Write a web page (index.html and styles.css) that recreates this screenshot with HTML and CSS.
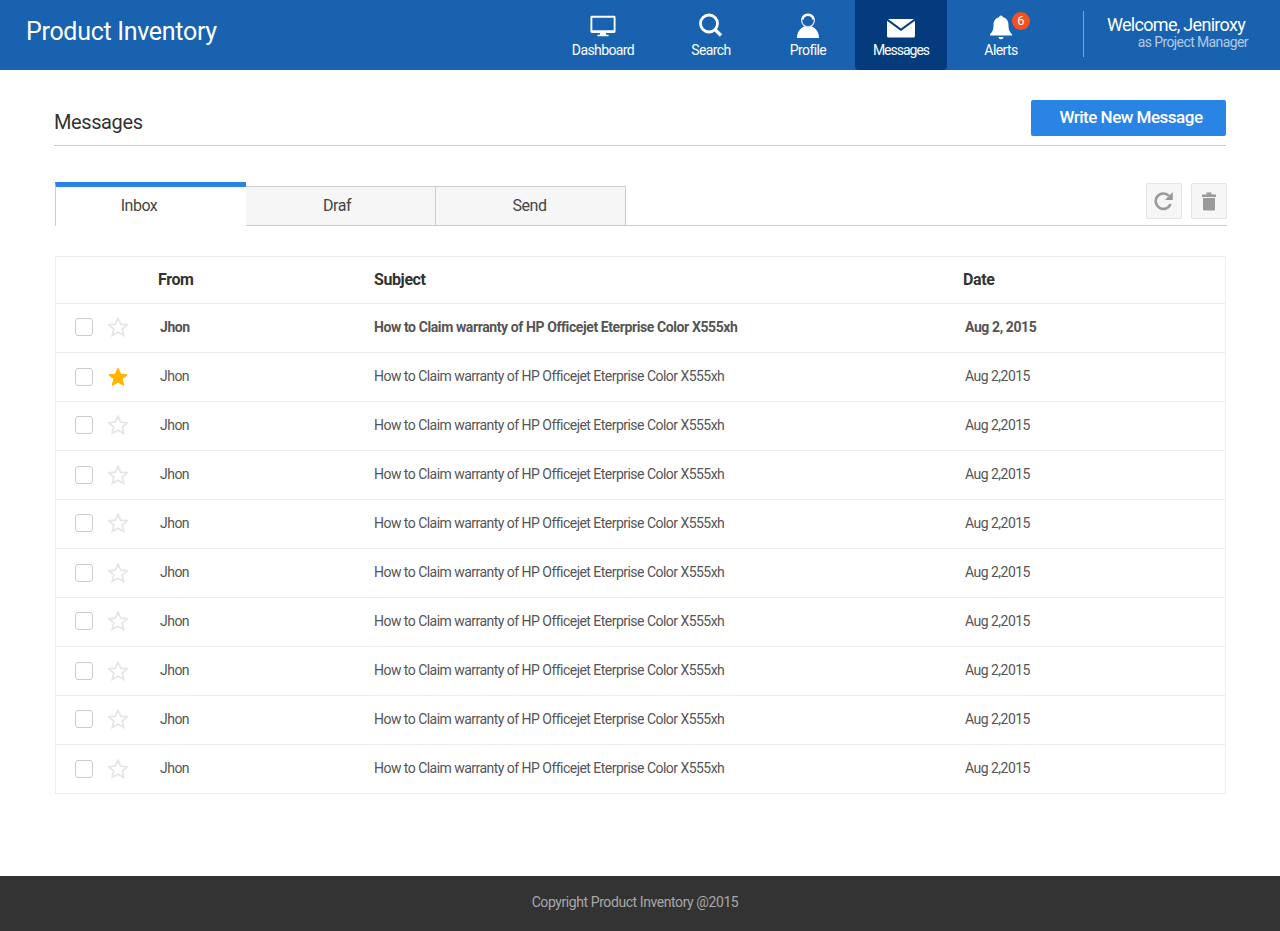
FILE: index.html
```html
<!DOCTYPE html>
<html lang="en">
<head>
<meta charset="utf-8">
<title>Product Inventory</title>
<link rel="stylesheet" href="styles.css">
</head>
<body>
<svg class="sprite" width="0" height="0" aria-hidden="true">
  <defs>
    <path id="star" d="M10 1.2l2.7 5.9 6.4.7-4.8 4.3 1.4 6.3L10 15.2l-5.700 3.200 1.400-6.300L.9 7.800l6.400-.7z"/>
  </defs>
</svg>
<header class="topbar">
  <div class="brand">Product Inventory</div>
  <nav class="nav">
    <a class="nav-item nav-dash"><svg class="nav-icon" width="26" height="24" viewBox="0 0 28 24"><path fill="#fff" d="M2 1h24a1.500 1.500 0 0 1 1.500 1.500V18a1.500 1.500 0 0 1-1.500 1.500H17l.5 2H20V23H8v-1.500h2.500l.5-2H2A1.500 1.500 0 0 1 .5 18V2.500A1.500 1.500 0 0 1 2 1zm.5 2.200v13.300h23V3.200z"/></svg><span>Dashboard</span></a>
    <a class="nav-item nav-search"><svg class="nav-icon" width="26" height="25" viewBox="0 0 26 25"><circle cx="11" cy="10.500" r="8.500" fill="none" stroke="#fff" stroke-width="2.800"/><path d="M17 16.500l6 6" stroke="#fff" stroke-width="3.200" fill="none"/></svg><span>Search</span></a>
    <a class="nav-item nav-profile"><svg class="nav-icon" width="24" height="26" viewBox="0 0 24 26"><circle cx="12" cy="8.500" r="6.300" fill="none" stroke="#fff" stroke-opacity=".8" stroke-width="1.400"/><path fill="none" stroke="#fff" stroke-width="2.200" d="M6.500 7.500a5.600 5.600 0 0 1 11 0"/><path fill="#fff" d="M1 26c0-6.500 3.500-10 7.500-11.800 2 1.400 5 1.400 7 0C19.500 16 23 19.500 23 26z"/></svg><span>Profile</span></a>
    <a class="nav-item nav-messages is-active"><svg class="nav-icon" width="30" height="20" viewBox="0 0 30 20"><path fill="#fff" d="M2 1h26L15 10.500zM1 2.800v15.200c0 .8.700 1.500 1.500 1.500h25c.8 0 1.500-.7 1.500-1.500V2.800L15 13z"/></svg><span>Messages</span></a>
    <a class="nav-item nav-alerts"><svg class="nav-icon nav-icon-bell" width="26" height="25" viewBox="0 0 26 25"><path fill="#fff" d="M13 .5a2 2 0 0 1 2 1.800c4 1 5.500 4 5.500 8 0 5 1.500 7 3.500 9v1.200H2v-1.200c2-2 3.500-4 3.500-9 0-4 1.500-7 5.500-8A2 2 0 0 1 13 .5zM10.500 22h5c0 1.200-1 2.200-2.500 2.200s-2.500-1-2.500-2.200z"/></svg><span>Alerts</span><b class="badge">6</b></a>
  </nav>
  <div class="welcome">
    <div class="welcome-name">Welcome, Jeniroxy</div>
    <div class="welcome-role">as Project Manager</div>
  </div>
</header>

<main class="content">
  <div class="page-head">
    <h1>Messages</h1>
    <button class="btn-write">Write New Message</button>
  </div>

  <div class="tabs">
    <a class="tab tab-inbox is-active">Inbox</a>
    <a class="tab tab-draf">Draf</a>
    <a class="tab tab-send">Send</a>
    <div class="tab-tools">
      <button class="tool"><svg width="20" height="20" viewBox="0 0 20 20"><path fill="none" stroke="#999" stroke-width="2.600" d="M16.600 13A7.700 7.700 0 1 1 15 4.800"/><path fill="#999" d="M18.800 1v8h-8z"/></svg></button>
      <button class="tool"><svg width="16" height="20" viewBox="0 0 16 20"><path fill="#999" d="M1 3.500h4.500V1.500h5v2H15V6H1zM2 7h12v11.500a1 1 0 0 1-1 1H3a1 1 0 0 1-1-1z"/></svg></button>
    </div>
  </div>

  <div class="table">
    <div class="row row-head"><span></span><span class="c-from">From</span><span class="c-subject">Subject</span><span class="c-date">Date</span></div>
    <div class="row is-unread"><span class="marks"><i class="check"></i><svg class="star" viewBox="0 0 20 20"><use href="#star"/></svg></span><span class="c-from">Jhon</span><span class="c-subject">How to Claim warranty of HP Officejet Eterprise Color X555xh</span><span class="c-date">Aug 2, 2015</span></div>
    <div class="row"><span class="marks"><i class="check"></i><svg class="star is-on" viewBox="0 0 20 20"><use href="#star"/></svg></span><span class="c-from">Jhon</span><span class="c-subject">How to Claim warranty of HP Officejet Eterprise Color X555xh</span><span class="c-date">Aug 2,2015</span></div>
    <div class="row"><span class="marks"><i class="check"></i><svg class="star" viewBox="0 0 20 20"><use href="#star"/></svg></span><span class="c-from">Jhon</span><span class="c-subject">How to Claim warranty of HP Officejet Eterprise Color X555xh</span><span class="c-date">Aug 2,2015</span></div>
    <div class="row"><span class="marks"><i class="check"></i><svg class="star" viewBox="0 0 20 20"><use href="#star"/></svg></span><span class="c-from">Jhon</span><span class="c-subject">How to Claim warranty of HP Officejet Eterprise Color X555xh</span><span class="c-date">Aug 2,2015</span></div>
    <div class="row"><span class="marks"><i class="check"></i><svg class="star" viewBox="0 0 20 20"><use href="#star"/></svg></span><span class="c-from">Jhon</span><span class="c-subject">How to Claim warranty of HP Officejet Eterprise Color X555xh</span><span class="c-date">Aug 2,2015</span></div>
    <div class="row"><span class="marks"><i class="check"></i><svg class="star" viewBox="0 0 20 20"><use href="#star"/></svg></span><span class="c-from">Jhon</span><span class="c-subject">How to Claim warranty of HP Officejet Eterprise Color X555xh</span><span class="c-date">Aug 2,2015</span></div>
    <div class="row"><span class="marks"><i class="check"></i><svg class="star" viewBox="0 0 20 20"><use href="#star"/></svg></span><span class="c-from">Jhon</span><span class="c-subject">How to Claim warranty of HP Officejet Eterprise Color X555xh</span><span class="c-date">Aug 2,2015</span></div>
    <div class="row"><span class="marks"><i class="check"></i><svg class="star" viewBox="0 0 20 20"><use href="#star"/></svg></span><span class="c-from">Jhon</span><span class="c-subject">How to Claim warranty of HP Officejet Eterprise Color X555xh</span><span class="c-date">Aug 2,2015</span></div>
    <div class="row"><span class="marks"><i class="check"></i><svg class="star" viewBox="0 0 20 20"><use href="#star"/></svg></span><span class="c-from">Jhon</span><span class="c-subject">How to Claim warranty of HP Officejet Eterprise Color X555xh</span><span class="c-date">Aug 2,2015</span></div>
    <div class="row"><span class="marks"><i class="check"></i><svg class="star" viewBox="0 0 20 20"><use href="#star"/></svg></span><span class="c-from">Jhon</span><span class="c-subject">How to Claim warranty of HP Officejet Eterprise Color X555xh</span><span class="c-date">Aug 2,2015</span></div>
  </div>
</main>

<footer class="footer">Copyright Product Inventory @2015</footer>
</body>
</html>
```

FILE: styles.css
```css
* { box-sizing: border-box; }
html, body { margin: 0; padding: 0; }
body {
  height: 931px;
  display: flex;
  flex-direction: column;
  background: #fff;
  color: #333;
  font-family: Roboto, "Liberation Sans", sans-serif;
  overflow: hidden;
}
.sprite { position: absolute; }

.topbar {
  height: 70px;
  flex: none;
  display: flex;
  align-items: stretch;
  background: #1862b0;
  color: #fff;
  padding-left: 26px;
}
.brand { font-size: 25px; line-height: 64px; width: 519px; letter-spacing: -.3px; flex: none; }
.nav { display: flex; flex: none; }
.nav-item {
  position: relative;
  display: flex;
  flex-direction: column;
  align-items: center;
  justify-content: flex-end;
  padding-bottom: 11px;
  font-size: 14px;
  line-height: 18px;
  letter-spacing: -.6px;
  flex: none;
}
.nav-icon { display: block; margin-bottom: 3px; }
.nav-icon-bell { margin-bottom: 1px; }
.nav-dash { width: 116px; }
.nav-search { width: 100px; }
.nav-profile { width: 94px; }
.nav-messages { width: 92px; letter-spacing: -1px; }
.nav-alerts { width: 108px; }
.nav-item.is-active { background: #033b7d; border-radius: 0 0 4px 4px; }
.badge {
  position: absolute;
  top: 12px;
  left: 65px;
  width: 18px;
  height: 18px;
  border-radius: 50%;
  background: #f4511e;
  font-size: 13px;
  font-weight: 400;
  line-height: 18px;
  letter-spacing: 0;
  text-align: center;
}
.welcome {
  margin: 11px 0 13px 28px;
  border-left: 1px solid #7ba4d2;
  padding: 3px 0 0 23px;
  flex: none;
  width: 165px;
}
.welcome-name { font-size: 18px; line-height: 22px; letter-spacing: -.7px; white-space: nowrap; }
.welcome-role { font-size: 14px; line-height: 13px; letter-spacing: -.6px; color: #b3cbe6; text-align: right; white-space: nowrap; }

.content { flex: 1; padding: 30px 54px 0; }
.page-head {
  height: 46px;
  display: flex;
  justify-content: space-between;
  align-items: flex-start;
  border-bottom: 1px solid #ccc;
}
.page-head h1 { margin: 9px 0 0; font-size: 20px; line-height: 27px; letter-spacing: -.4px; font-weight: 400; color: #333; }
.btn-write {
  width: 195px;
  height: 36px;
  border: 0;
  border-radius: 2px;
  background: #2a84e6;
  color: #fff;
  font: 500 17px/34px Roboto, sans-serif;
  letter-spacing: -.5px;
  padding: 0 0 2px 5px;
}

.tabs {
  margin: 36px -1px 0 1px;
  height: 44px;
  display: flex;
  align-items: flex-end;
  border-bottom: 1px solid #ccc;
}
.tab {
  width: 190px;
  height: 40px;
  margin-bottom: -1px;
  background: #f6f6f6;
  border: 1px solid #ccc;
  border-left: 0;
  text-align: center;
  font-size: 16px;
  line-height: 38px;
  letter-spacing: -.5px;
  color: #444;
}
.tab-draf { padding-right: 7px; }
.tab-send { padding-right: 2px; }
.tab.is-active {
  width: 191px;
  height: 44px;
  background: #fff;
  border: 0;
  border-left: 1px solid #ccc;
  border-top: 5px solid #2a84e6;
  padding-right: 24px;
  line-height: 37px;
}
.tab-tools { margin: 0 0 6px auto; display: flex; gap: 9px; align-self: flex-end; }
.tool {
  width: 36px;
  height: 36px;
  padding: 0;
  border: 1px solid #e4e4e4;
  border-radius: 2px;
  background: #f6f6f6;
  display: flex;
  align-items: center;
  justify-content: center;
}

.table { margin: 30px 0 0 1px; border: 1px solid #ececec; border-bottom: 0; }
.row {
  display: grid;
  grid-template-columns: 104px 214px 591px 1fr;
  height: 49px;
  align-items: center;
  border-bottom: 1px solid #ececec;
  font-size: 14px;
  letter-spacing: -.53px;
  color: #555;
}
.c-from, .c-subject, .c-date { margin-top: -2px; }
.row-head {
  height: 47px;
  font-size: 16px;
  letter-spacing: -.4px;
  font-weight: 700;
  color: #333;
}
.row-head .c-from { margin-left: -2px; }
.row-head .c-date { margin-left: -2px; }
.is-unread { font-weight: 700; letter-spacing: -.4px; }
.marks { display: flex; align-items: center; padding-left: 19px; gap: 15px; height: 100%; margin-top: -2px; }
.row:nth-child(odd) .marks { margin-top: 0; }
.check {
  width: 18px;
  height: 18px;
  flex: none;
  border: 1px solid #ccc;
  border-radius: 3px;
  background: #fff;
}
.star {
  width: 20px;
  height: 20px;
  flex: none;
  fill: none;
  stroke: #e6e6e6;
  stroke-width: 1.800;
}
.star.is-on { fill: #ffb400; stroke: #ffb400; stroke-width: 1; }

.footer {
  height: 55px;
  flex: none;
  background: #333;
  color: #a8a8a8;
  font-size: 14px;
  letter-spacing: -.42px;
  line-height: 52px;
  text-align: center;
  padding-right: 10px;
}
```
